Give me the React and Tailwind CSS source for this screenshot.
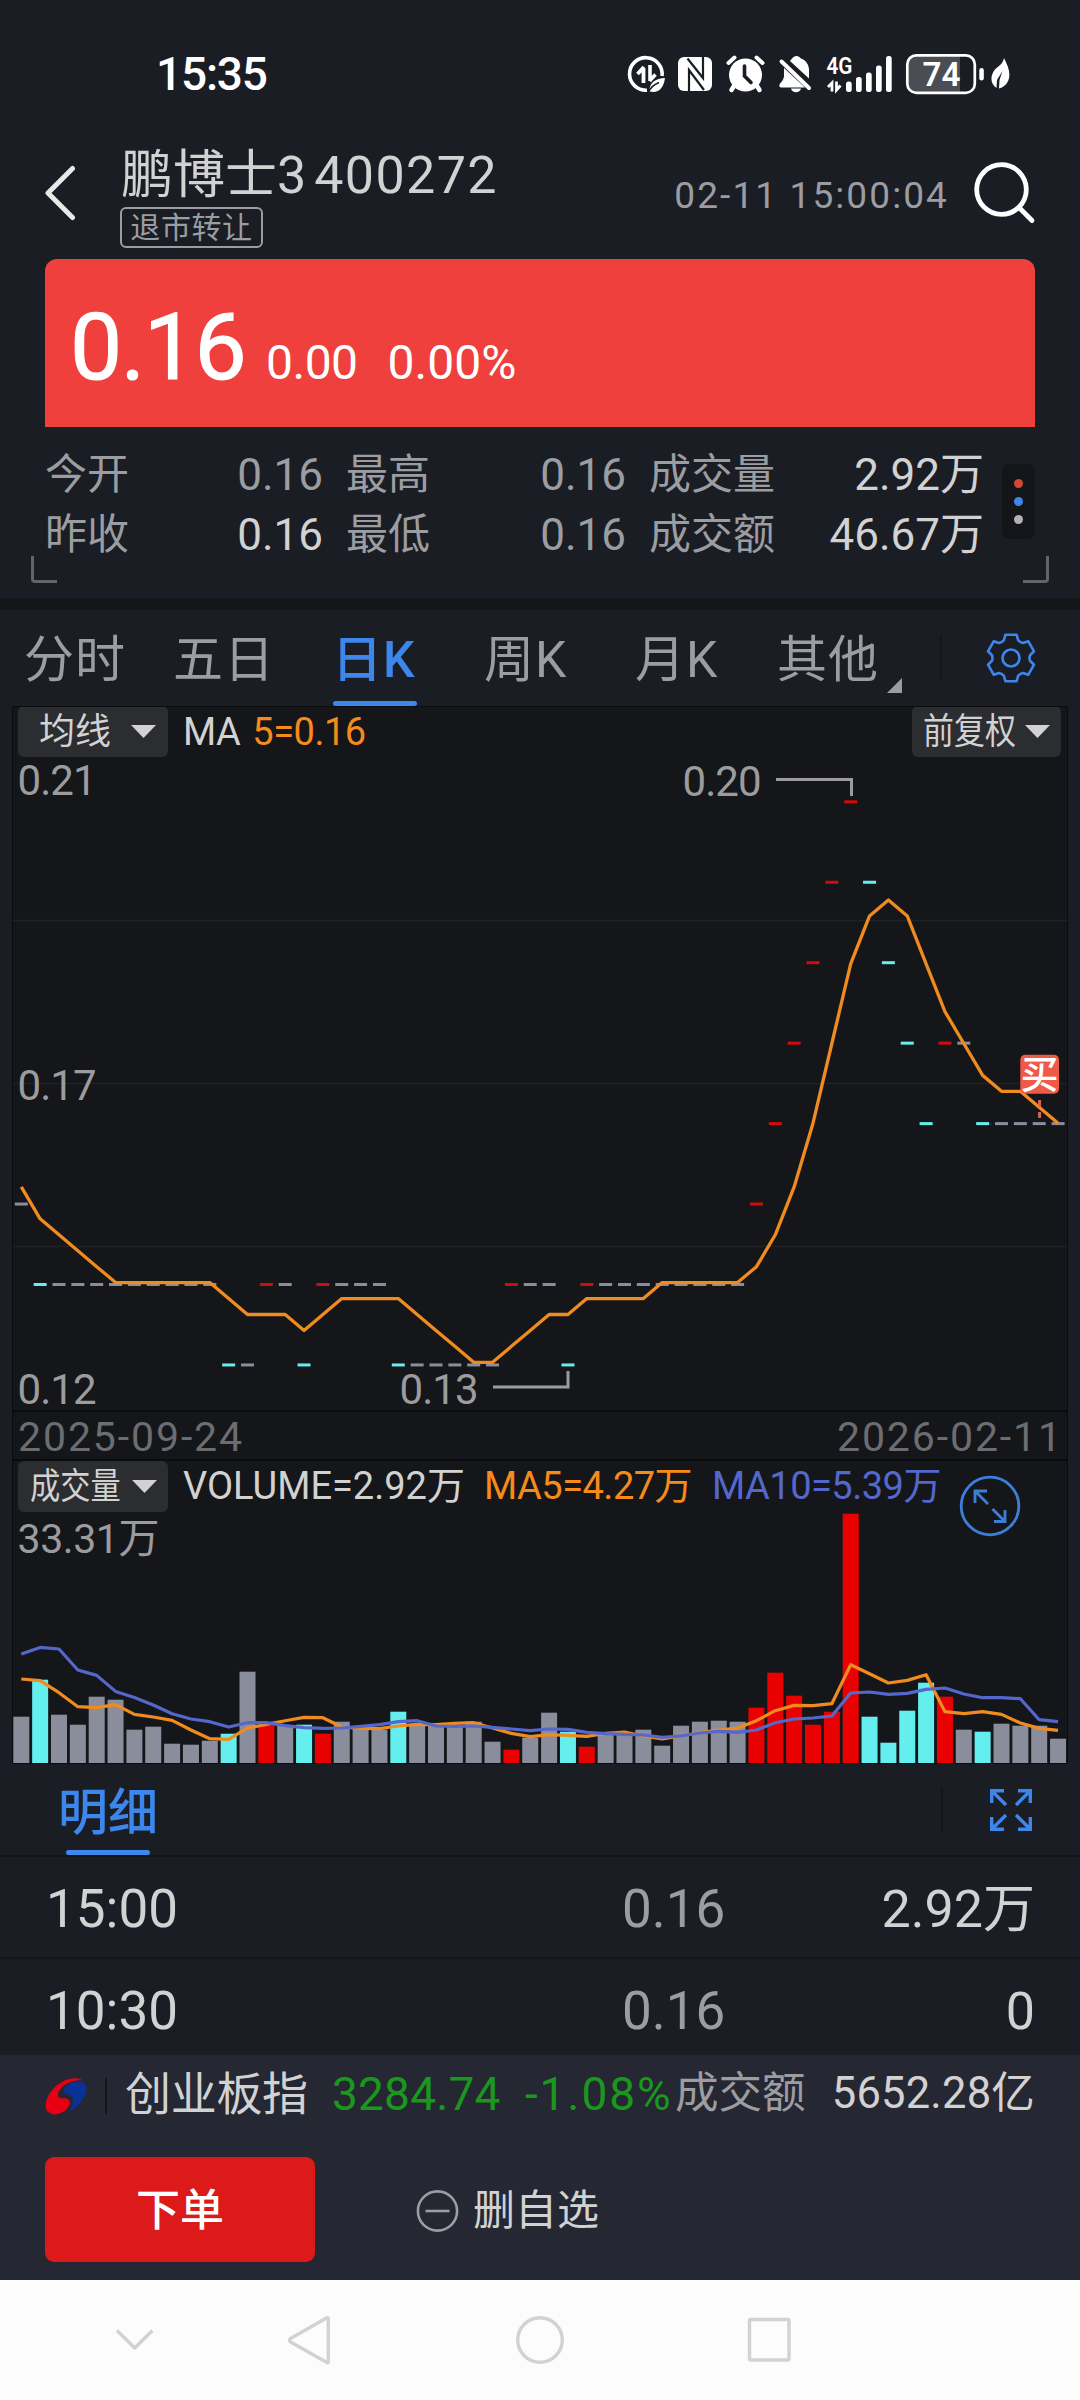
import { useState } from 'react';

const GRAY = '#8a8d9b';
const RED = '#e90000';
const CYAN = '#64eeee';

// close in cents: [close, tone, volume bar height]
const DAYS = [
  [15, GRAY, 47], [14, CYAN, 84], [14, GRAY, 49], [14, GRAY, 39], [14, GRAY, 67],
  [14, GRAY, 64], [14, GRAY, 34], [14, GRAY, 37], [14, GRAY, 20], [14, GRAY, 19],
  [14, GRAY, 23], [13, CYAN, 30], [13, GRAY, 92], [14, RED, 39], [14, GRAY, 38],
  [13, CYAN, 39], [14, RED, 30], [14, GRAY, 42], [14, GRAY, 35], [14, GRAY, 34],
  [13, CYAN, 52], [13, GRAY, 38], [13, GRAY, 38], [13, GRAY, 38], [13, GRAY, 42],
  [13, GRAY, 22], [14, RED, 14], [14, GRAY, 26], [14, GRAY, 51], [13, CYAN, 32],
  [14, RED, 17], [14, GRAY, 29], [14, GRAY, 29], [14, GRAY, 34], [14, GRAY, 18],
  [14, GRAY, 38], [14, GRAY, 42], [14, GRAY, 43], [14, GRAY, 42], [15, RED, 56],
  [16, RED, 91], [17, RED, 68], [18, RED, 39], [19, RED, 52], [20, RED, 250],
  [19, CYAN, 47], [18, CYAN, 21], [17, CYAN, 53], [16, CYAN, 81], [17, RED, 67],
  [17, GRAY, 34], [16, CYAN, 32], [16, GRAY, 40], [16, GRAY, 38], [16, GRAY, 38],
  [16, GRAY, 25],
];

const VOL_MA5 = [
  84.7, 83, 71, 57, 56, 59, 49.3, 46.7, 43.3, 33.7, 25, 24.3, 35.7, 39.3, 43, 46.3, 46, 36.7, 35.3, 35,
  37.7, 39.3, 39, 40.3, 41, 35.7, 30.3, 27, 29, 28.3, 27.3, 30.3, 31.7, 27.7, 24.7, 27.7, 31, 33.7, 35.7, 43,
  53, 58.3, 58, 60, 99, 90, 80.7, 83.3, 89, 52, 50, 52, 49.3, 40.7, 35.3, 33.3,
];

const VOL_MA10 = [
  109.7, 116.3, 114.7, 93.7, 88.3, 72.3, 66.3, 58.7, 50, 44.7, 42, 36.7, 41, 41, 38, 36, 35.3, 35.7, 37.3, 39,
  42, 43, 37.7, 37.3, 37.7, 36.3, 34.7, 33, 34.7, 34.3, 31.3, 30, 29.3, 28.7, 26.3, 27.7, 30.7, 32.3, 31.3, 33.7,
  41, 44.7, 45.7, 47.7, 70.7, 71.7, 69.3, 70.3, 74.3, 75.7, 69.7, 66, 66, 65, 44, 42,
];

const px = (i) => 21.3 + 18.85 * i;

// the four closes before the visible range, so the average starts at day one
const closes = [16, 15, 15, 15, ...DAYS.map((d) => d[0])];
const priceMa = DAYS.map((_, i) => {
  const avg = closes.slice(i, i + 5).reduce((a, b) => a + b, 0) / 5;
  return `${px(i)},${1282.6 - (avg - 14) * 79.7}`;
}).join(' ');

const volLine = (values) => values.map((v, i) => `${px(i)},${1763.7 - v}`).join(' ');

const StatusIcons = () => (
  <svg width="390" height="44" viewBox="620 51 390 44" fill="#fff">
    {/* data saver */}
    <path d="M662 75 A16.3 16.3 0 1 0 647 89.2" fill="none" stroke="#fff" strokeWidth="3.6" />
    <path d="M643.5 82V67M644 66l-6.500 7" fill="none" stroke="#fff" strokeWidth="3.8" />
    <path d="M650 64v16M649.500 80l6-6.5" fill="none" stroke="#fff" strokeWidth="3.6" />
    <path d="M665 77c-9 .5-16 4-15.500 13.500 9 2 14-3 15.500-13.500z" />
    <path d="M648 92c2-5 6-8.500 11-10.500" fill="none" stroke="#1b1d25" strokeWidth="1.600" />
    {/* nfc */}
    <rect x="678" y="56" width="34" height="34" rx="6" />
    <path d="M689 90.500V69l15 20M703 55.500V77L687.500 57.500" fill="none" stroke="#1b1d25" strokeWidth="2.200" />
    {/* alarm */}
    <circle cx="745.500" cy="74" r="16.500" />
    <path d="M728.500 62l6-5.500M762.500 62l-6-5.500" stroke="#fff" strokeWidth="4" strokeLinecap="round" />
    <path d="M734 85l-2.500 4M757 85l2.500 4" stroke="#fff" strokeWidth="4.500" strokeLinecap="round" />
    <path d="M744.500 65v10l6.500 6.500" fill="none" stroke="#1b1d25" strokeWidth="3.600" strokeLinecap="round" />
    {/* muted bell */}
    <path d="M792 57.500c1.500-1.200 2.500-2.500 4.500-2.500s3 1 4.500 2.500c5 2 8 6 8 11.500v8.500l-19-17.500z" />
    <path d="M784 67l21 19.500h-24c-2 0-2-3-.5-4.500 2-2 3-4 3.500-6.500z" />
    <path d="M781.500 60.500l27.500 26.500" stroke="#fff" strokeWidth="4" strokeLinecap="round" />
    <path d="M791 87.500h10c-1 5-9 5-10 0z" />
    {/* signal */}
    <text x="826.500" y="72.800" fontSize="24.500" fontWeight="600" textLength="26" lengthAdjust="spacingAndGlyphs">4G</text>
    <path d="M832 90.500V82l-4 4M836.500 80.500V89l4-4.500" fill="none" stroke="#fff" strokeWidth="2.800" />
    <rect x="846" y="80.500" width="5.700" height="10.500" rx="2.500" />
    <rect x="856" y="76" width="5.700" height="15" rx="2.500" />
    <rect x="866" y="71.500" width="5.700" height="19.500" rx="2.500" />
    <rect x="876" y="64.500" width="5.700" height="26.500" rx="2.500" />
    <rect x="886" y="55" width="5.700" height="36" rx="2.500" />
    {/* battery */}
    <path d="M917 55h43v36h-43a9 9 0 0 1-9-9V64a9 9 0 0 1 9-9z" fill="#4b4d54" />
    <rect x="907.300" y="54.300" width="67.500" height="37.500" rx="9" fill="none" stroke="#fff" strokeWidth="2.700" />
    <text x="922.500" y="85" fontSize="34" fontWeight="600" textLength="38" lengthAdjust="spacingAndGlyphs">74</text>
    <rect x="979.300" y="67" width="4.500" height="12.500" rx="2.200" />
    <path d="M1004 57c4 8 7 15 4.500 22-1.500 4.500-5.500 7.500-9.500 8.500l.5-8.500 3-9-5.500 9-.5 8c-7-5-6-13-1.500-18.500 4-4 7.500-5 9-11.500z" />
  </svg>
);

const Header = () => (
  <div className="flex h-[112px] items-start pl-[45px] pr-[44px]">
    <svg className="mt-[18px]" width="32" height="56" viewBox="0 0 32 56" fill="none" stroke="#e8e8e8" strokeWidth="5" strokeLinecap="round" strokeLinejoin="round">
      <path d="M27.500 3.500L3 28l24.500 24.500" />
    </svg>
    <div className="ml-[43px] flex-1">
      <div className="flex h-14 items-center pl-px pt-px text-[52px] leading-none text-[#d2d2d2]">
        <span>鹏博士</span>
        <span>3</span>
        <span className="ml-[8px] tracking-[1.4px]">400272</span>
      </div>
      <div className="mt-1 flex h-[41px] w-[143px] items-center justify-center rounded-md border-2 border-[#9c9da2] pt-px text-[30px] leading-none tracking-[0.6px] text-[#9c9da2]">
        退市转让
      </div>
    </div>
    <span className="flex h-24 items-center whitespace-pre pt-px text-[37px] tracking-[2.1px] text-[#9c9da2]">02-11 15:00:04</span>
    <svg className="ml-[25px] mt-[15px]" width="62" height="62" viewBox="0 0 62 62" fill="none" stroke="#fff" strokeWidth="4.800" strokeLinecap="round">
      <circle cx="27.500" cy="27.500" r="24.800" />
      <path d="M45.500 46L58 58.500" />
    </svg>
  </div>
);

const Stat = ({ label, value, bright }) => (
  <div className="flex h-[60px] items-center justify-between leading-none">
    <span className="text-[42px] text-[#9c9da1]">{label}</span>
    <span className={bright ? 'text-[44px] text-[#d2d2d2]' : 'text-[44px] text-[#9c9da1]'}>{value}</span>
  </div>
);

const Quote = () => (
  <>
    <div className="mx-[45px] flex h-[168px] items-baseline rounded-t-xl bg-[#ef403d] pl-[25px] pt-[42px] leading-none text-white">
      <span className="w-[181px] text-[93px] leading-none tracking-[-1.5px] [-webkit-text-stroke:1px_#fff]">0.16</span>
      <span className="ml-[15px] text-[48px] leading-none tracking-[-0.5px]">0.00</span>
      <span className="ml-[30px] text-[48px] leading-none">0.00%</span>
    </div>
    <div className="relative flex h-[171px] pl-[45px] pt-[18px]">
      <div className="grid h-[120px] grid-cols-[278px_280px_335px] gap-x-[23px]">
        <Stat label="今开" value="0.16" />
        <Stat label="最高" value="0.16" />
        <Stat label="成交量" value="2.92万" bright />
        <Stat label="昨收" value="0.16" bright />
        <Stat label="最低" value="0.16" />
        <Stat label="成交额" value="46.67万" bright />
      </div>
      <div className="ml-[18px] mt-[19px] flex h-[75px] w-[33px] flex-col items-center justify-center gap-[9px] rounded-lg bg-[#141519]">
        <span className="size-[9px] rounded-full bg-[#d04936]" />
        <span className="size-[9px] rounded-full bg-[#3c86ec]" />
        <span className="size-[9px] rounded-full bg-[#b2b2b2]" />
      </div>
      <span className="absolute bottom-[15px] left-[31px] h-[27px] w-[26px] rounded-bl border-b-[3px] border-l-[3px] border-[#63656b]" />
      <span className="absolute bottom-[15px] right-[31px] h-[27px] w-[26px] rounded-br border-b-[3px] border-r-[3px] border-[#63656b]" />
    </div>
  </>
);

const TABS = [
  ['分时', 'w-[149px]'],
  ['五日', 'w-[159px]'],
  ['日K', 'w-[152px]'],
  ['周K', 'w-[151px]'],
  ['月K', 'w-[142px]'],
  ['其他', 'w-[125px]'],
];

const Tabs = () => {
  const [active, setActive] = useState('日K');

  return (
    <div className="flex h-24 items-center pl-[24px]">
      {TABS.map(([name, width]) => (
        <button key={name} onClick={() => setActive(name)} className={`relative h-full pt-1 text-left text-[50px] leading-none tracking-[1px] ${width}`}>
          <span className={name === active ? 'font-medium text-[#3c86ec]' : 'text-[#9c9da1]'}>{name}</span>
          {name === active && <span className="absolute bottom-0 left-px h-[5px] w-[84px] rounded-sm bg-[#3c86ec]" />}
          {name === '其他' && (
            <svg className="absolute bottom-[13px] right-0" width="15" height="15" viewBox="0 0 15 15">
              <path d="M15 0v15H0z" fill="#9c9da1" />
            </svg>
          )}
        </button>
      ))}
      <span className="ml-[38px] h-[45px] w-[2px] bg-[#15161a]" />
      <svg className="ml-[44px]" width="50" height="50" viewBox="-25 -25 50 50" fill="none" stroke="#3c86ec" strokeWidth="2.600" strokeLinejoin="round">
        <path d="M-5.600-23.200H5.600L7.200-17.600Q9.500-15.500 12-15L17.200-16.800 23-6.700 19-2.800Q18 0 19 2.800L23 6.700 17.200 16.800 12 15Q9.500 15.500 7.200 17.600L5.600 23.200H-5.600L-7.200 17.600Q-9.500 15.500-12 15L-17.200 16.800-23 6.700-19 2.800Q-18 0-19-2.800L-23-6.700-17.200-16.800-12-15Q-9.500-15.500-7.200-17.600Z" />
        <circle r="8.500" />
      </svg>
    </div>
  );
};

const Caret = () => (
  <svg width="25" height="13" viewBox="0 0 25 13">
    <path d="M0 0h25L12.500 13z" fill="#d2d2d2" />
  </svg>
);

const PriceChart = () => (
  <svg className="block overflow-visible" width="1056" height="653" viewBox="12 757 1056 653" fontSize="42" fill="#9c9c9e">
    <path d="M12 920.500h1056M12 1083.500h1056M12 1246.500h1056" stroke="#212226" strokeWidth="1.500" />
    {DAYS.map(([close, tone], i) => (
      <rect key={i} x={px(i) - 6.5} y={1283 - (close - 14) * 80.45} width="13" height="3" fill={tone === RED ? '#d00c0c' : tone} />
    ))}
    <polyline points={priceMa} fill="none" stroke="#f08b20" strokeWidth="3.300" strokeLinejoin="round" />
    <text x="17.500" y="795" textLength="79">0.21</text>
    <text x="17.500" y="1100" textLength="79">0.17</text>
    <text x="17.500" y="1404" textLength="79">0.12</text>
    <text x="682.500" y="795.500" textLength="79">0.20</text>
    <text x="399.500" y="1404" textLength="79">0.13</text>
    <path d="M776 779.500h75.500V796M493 1387h75V1371" fill="none" stroke="#9c9c9e" strokeWidth="3" />
    {/* buy marker */}
    <rect x="1020.300" y="1054.700" width="38.700" height="39" rx="5" fill="#ee5a47" />
    <text x="1020.500" y="1088" fontSize="38" fontWeight="500" fill="#fff">买</text>
    <path d="M1039.600 1100v18" stroke="#dc6257" strokeWidth="3" strokeDasharray="6.500 5.500" />
  </svg>
);

const VolumeChart = () => (
  <svg className="block" width="1056" height="252" viewBox="12 1512 1056 252">
    {DAYS.map(([, tone, h], i) => (
      <rect key={i} x={px(i) - 8} y={1763.7 - h} width="16" height={h} fill={tone} />
    ))}
    <polyline points={volLine(VOL_MA5)} fill="none" stroke="#f08b20" strokeWidth="3.200" strokeLinejoin="round" />
    <polyline points={volLine(VOL_MA10)} fill="none" stroke="#5468cc" strokeWidth="3.200" strokeLinejoin="round" />
    <text x="17.500" y="1552.500" fontSize="41" fill="#9c9c9e" textLength="142">33.31万</text>
  </svg>
);

const Charts = () => (
  <div className="relative mx-3 h-[1058px] bg-[#15161a] outline-1 -outline-offset-1 outline-[#0b0c0f]">
    <div className="flex h-[51px] items-center pl-[6px] pr-[7px] leading-none">
      <div className="flex h-full w-[150px] items-center gap-[20px] rounded-md bg-[#2c2d31] pl-[21px]">
        <span className="text-[36px] text-[#d2d2d2]">均线</span>
        <Caret />
      </div>
      <span className="ml-[15px] text-[38px] tracking-[-0.5px] text-[#d2d2d2]">MA</span>
      <span className="ml-[12px] text-[38px] tracking-[-0.5px] text-[#f58b1b]">5=0.16</span>
      <div className="ml-auto flex h-full w-[149px] items-center rounded-md bg-[#2c2d31] pl-[11px]">
        <span className="w-[102px] origin-left scale-x-[0.86] whitespace-nowrap text-[36px] text-[#d2d2d2]">前复权</span>
        <Caret />
      </div>
    </div>
    <PriceChart />
    <div className="flex h-[51px] items-center justify-between border-y-2 border-[#0b0c0f] pl-[6px] pr-[5px] pt-[3px] text-[41px] leading-none tracking-[1.9px] text-[#6c6d71]">
      <span>2025-09-24</span>
      <span>2026-02-11</span>
    </div>
    <div className="flex h-[51px] items-center pl-[6px] leading-none">
      <div className="flex h-full w-[150px] items-center rounded-md bg-[#2c2d31] pl-[12px]">
        <span className="w-[102px] origin-left scale-x-[0.84] whitespace-nowrap text-[36px] text-[#d2d2d2]">成交量</span>
        <Caret />
      </div>
      <span className="mb-[2px] ml-[15px] w-[301px] text-[38px] text-[#d2d2d2]">VOLUME=2.92万</span>
      <span className="mb-[2px] w-[228px] text-[38px] tracking-[-0.5px] text-[#f58b1b]">MA5=4.27万</span>
      <span className="mb-[2px] text-[38px] tracking-[-0.5px] text-[#5468cc]">MA10=5.39万</span>
    </div>
    <VolumeChart />
    <svg className="absolute right-[47px] top-[769px]" width="62" height="62" viewBox="-31 -31 62 62" fill="none" stroke="#3a80d8" strokeWidth="2.800">
      <circle r="28.800" />
      <path d="M-15-3V-15H-3M-14.500-14.500L-2-2M15 4V15.500H4M2.500 3L15 15.500" />
    </svg>
  </div>
);

const TRADES = [
  ['15:00', '0.16', '2.92万'],
  ['10:30', '0.16', '0'],
];

const Details = () => (
  <>
    <div className="flex h-[93px] items-center border-b-2 border-[#14161b] pl-[58px]">
      <div className="relative h-full pt-[24px] text-[50px] font-medium leading-none text-[#3c86ec]">
        明细
        <span className="absolute bottom-0 left-2 h-[5px] w-[84px] rounded-sm bg-[#3c86ec]" />
      </div>
      <span className="ml-auto h-[45px] w-[2px] bg-[#15161a]" />
      <svg className="ml-[47px] mr-[48px]" width="42" height="42" viewBox="0 0 42 42" fill="none" stroke="#3c86ec" strokeWidth="3.400">
        <path d="M1.700 14V1.700H14M1.700 1.700L16 16M28 1.700H40.300V14M40.300 1.700L26 16M1.700 28V40.300H14M1.700 40.300L16 26M40.300 28V40.300H28M40.300 40.300L26 26" />
      </svg>
    </div>
    <div className="h-[198px] overflow-hidden">
      {TRADES.map(([time, price, amount]) => (
        <div key={time} className="flex h-[102px] items-center border-b-2 border-[#14161b] pl-[46px] pr-[45px] pt-[5px] text-[53px] leading-none text-[#d2d2d2]">
          <span className="w-[576px]">{time}</span>
          <span className="text-[#9c9da1]">{price}</span>
          <span className="ml-auto text-[52px]">{amount}</span>
        </div>
      ))}
    </div>
  </>
);

const BottomBar = () => (
  <div className="h-[225px] bg-[#252732]">
    <div className="flex h-[77px] items-center pl-[45px] pr-[45px] leading-none">
      <svg className="mt-1.5" width="42" height="39" viewBox="135 110 126 118">
        <path d="M247 120C225 106 185 118 160 145c-22 25-30 55-18 69 16 18 48 8 64-14 8-14 2-26-14-26-12 2-20-2-18-14 4-20 36-42 73-40z" fill="#e60012" />
        <path d="M250 127c-18-7-45 1-58 19-4 10 4 16 14 17 12 3 16 15 12 29-4 12-8 18-10 24 27-16 48-41 52-68 1-12-4-18-10-21z" fill="#0a3296" />
      </svg>
      <span className="ml-[18px] mt-1 h-9 w-[2px] bg-[#15161a]" />
      <span className="ml-[18px] w-[207px] text-[46px] tracking-[-0.3px] text-[#d2d2d2]">创业板指</span>
      <span className="w-[193px] text-[46px] tracking-[0.2px] text-[#1a981e]">3284.74</span>
      <span className="w-[150px] whitespace-nowrap text-[46px] tracking-[1.9px] text-[#1a981e]">-1.08%</span>
      <span className="text-[43.500px] text-[#9c9da1]">成交额</span>
      <span className="ml-auto text-[43.500px] tracking-[0.2px] text-[#d2d2d2]">5652.28亿</span>
    </div>
    <div className="mt-[25px] flex h-[105px] items-center pl-[45px] leading-none">
      <button className="h-full w-[270px] rounded-[9px] bg-[#dc1a1a] pt-0.5 text-[44px] font-medium text-white">下单</button>
      <svg className="ml-[101px]" width="43" height="44" viewBox="0 0 43 44" fill="none" stroke="#9c9da1" strokeWidth="2.600">
        <circle cx="21.500" cy="23" r="19.600" />
        <path d="M9.500 23h24" />
      </svg>
      <span className="ml-[14px] pt-0.5 text-[42px] text-[#d2d2d2]">删自选</span>
    </div>
  </div>
);

const NavBar = () => (
  <div className="flex h-[120px] items-center bg-[#fcfcfc]">
    <svg width="1080" height="50" viewBox="0 2315 1080 50" fill="none" stroke="#d2d2d2" strokeWidth="3.400" strokeLinejoin="round">
      <path d="M117 2330.500l17.700 17.500 17.700-17.500" />
      <path d="M328.300 2319v42.500q0 2-1.800.8L290.500 2342q-1.800-1.500 0-3.500L326.500 2318q1.800-1 1.800 1z" />
      <circle cx="540" cy="2340" r="22.300" />
      <rect x="749.500" y="2319.500" width="39.500" height="40.500" rx="1.500" />
    </svg>
  </div>
);

export default function App() {
  return (
    <div className="h-[2400px] w-[1080px] overflow-hidden bg-[#1b1d25] font-[family-name:Roboto,'Noto_Sans_CJK_SC',sans-serif]">
      <div className="flex h-[147px] items-center justify-between pl-[156px] pr-[70px]">
        <span className="text-[46px] font-medium leading-none tracking-[-1.2px] text-white">15:35</span>
        <StatusIcons />
      </div>
      <Header />
      <Quote />
      <div className="h-3 bg-[#15161a]" />
      <Tabs />
      <Charts />
      <Details />
      <BottomBar />
      <NavBar />
    </div>
  );
}
